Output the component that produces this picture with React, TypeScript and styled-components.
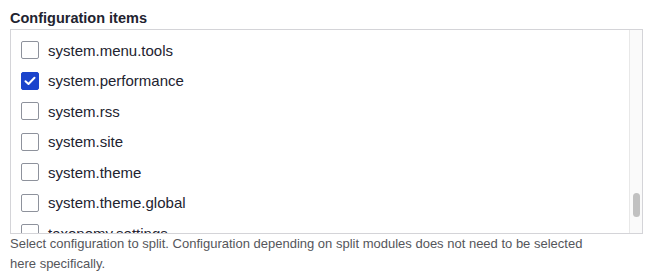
import React from 'react';
import styled, { createGlobalStyle } from 'styled-components';

const GlobalStyle = createGlobalStyle`
  body {
    margin: 0;
    background: #ffffff;
    font-family: 'Liberation Sans', Arial, sans-serif;
    color: #222330;
  }
`;

const Field = styled.div`
  padding: 9px 9px 0 10px;
`;

const Label = styled.div`
  font-size: 14.5px;
  line-height: 18px;
  font-weight: 700;
  margin-bottom: 2px;
`;

const Box = styled.div`
  display: flex;
  height: 205px;
  box-sizing: border-box;
  border: 1px solid #d4d4d8;
  background: #fff;
`;

const List = styled.div`
  flex: 1;
  overflow: hidden;
  padding: 5px 0 0 10px;
`;

const Row = styled.label`
  display: flex;
  align-items: center;
  gap: 9px;
  height: 30.5px;
  font-size: 15px;
`;

const Check = styled.span<{ $checked?: boolean }>`
  display: inline-flex;
  align-items: center;
  justify-content: center;
  width: 18px;
  height: 18px;
  box-sizing: border-box;
  border-radius: 2px;
  border: 1px solid ${(p) => (p.$checked ? '#1b44cc' : '#8e929c')};
  background: ${(p) => (p.$checked ? '#1b44cc' : '#fff')};
  flex-shrink: 0;
`;

const Track = styled.div`
  width: 13px;
  border-left: 1px solid #e8e8e8;
  background: #fafafa;
  padding: 163px 0 0 3px;
  box-sizing: border-box;
`;

const Thumb = styled.div`
  width: 7px;
  height: 24px;
  border-radius: 4px;
  background: #c1c1c1;
`;

const Description = styled.div`
  max-width: 598px;
  font-size: 13px;
  line-height: 20px;
  color: #55565b;
`;

const items = [
  { name: 'system.menu.tools', checked: false },
  { name: 'system.performance', checked: true },
  { name: 'system.rss', checked: false },
  { name: 'system.site', checked: false },
  { name: 'system.theme', checked: false },
  { name: 'system.theme.global', checked: false },
  { name: 'taxonomy.settings', checked: false },
];

export default function App() {
  return (
    <>
      <GlobalStyle />
      <Field>
        <Label>Configuration items</Label>
        <Box>
          <List>
            {items.map((it) => (
              <Row key={it.name}>
                <Check $checked={it.checked}>
                  {it.checked && (
                    <svg width="12" height="10" viewBox="0 0 12 10">
                      <path d="M1.5 5.2 L4.5 8 L10.5 1.8" fill="none" stroke="#fff" strokeWidth="2" strokeLinecap="round" strokeLinejoin="round" />
                    </svg>
                  )}
                </Check>
                {it.name}
              </Row>
            ))}
          </List>
          <Track>
            <Thumb />
          </Track>
        </Box>
        <Description>
          Select configuration to split. Configuration depending on split modules does not need to be selected
          here specifically.
        </Description>
      </Field>
    </>
  );
}
